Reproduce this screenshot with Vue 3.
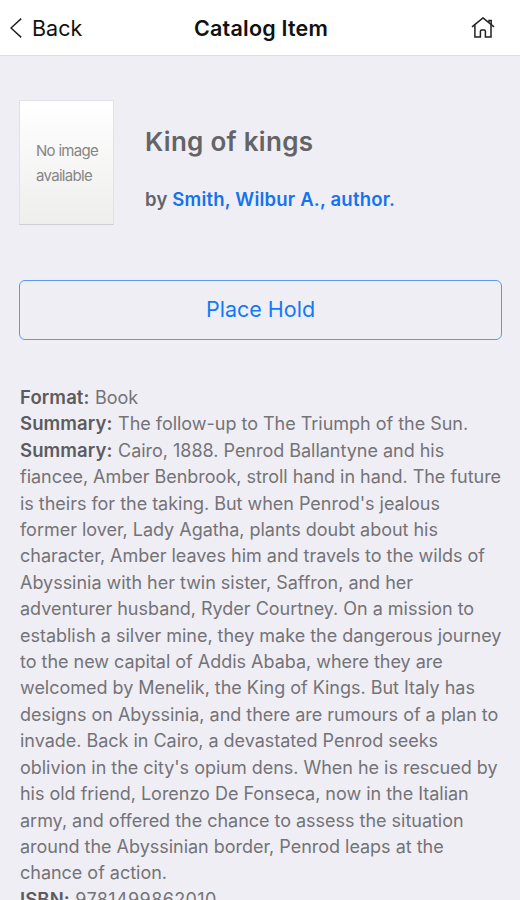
<template>
  <div class="screen">
    <header class="nav-bar">
      <button class="back-btn" type="button">
        <svg class="back-icon" width="12" height="20" viewBox="0 0 12 20">
          <path d="M11.2 0.6L1 10L11.2 19.4" />
        </svg>
        <span>Back</span>
      </button>
      <h1 class="nav-title">Catalog Item</h1>
      <button class="home-btn" type="button" aria-label="Home">
        <svg class="home-icon" width="24" height="22" viewBox="0 0 24 22">
          <path d="M1 9.8L12 0.9L23 9.8" />
          <path d="M3.9 8V20H9.4V14.2Q9.4 13 10.6 13H13.2Q14.4 13 14.4 14.2V20H20V8" />
          <path d="M18 5.2V3.6H20.2V7.6" />
        </svg>
      </button>
    </header>

    <main class="content">
      <section class="item">
        <div class="cover">No image<br />available</div>
        <div class="item-info">
          <h2 class="item-title">{{ item.title }}</h2>
          <p class="item-author">by <a>{{ item.author }}</a></p>
        </div>
      </section>

      <button class="hold-btn" type="button">Place Hold</button>

      <section class="details">
        <p v-for="(field, index) in item.fields" :key="index" class="field">
          <b>{{ field.label }}:</b> <span :class="{ digits: field.label === 'ISBN' }">{{ field.value }}</span>
        </p>
      </section>
    </main>
  </div>
</template>

<script setup>
import { reactive } from 'vue'

const item = reactive({
  title: 'King of kings',
  author: 'Smith, Wilbur A., author.',
  fields: [
    { label: 'Format', value: 'Book' },
    { label: 'Summary', value: 'The follow-up to The Triumph of the Sun.' },
    {
      label: 'Summary',
      value: `Cairo, 1888. Penrod Ballantyne and his
fiancee, Amber Benbrook, stroll hand in hand. The future
is theirs for the taking. But when Penrod's jealous
former lover, Lady Agatha, plants doubt about his
character, Amber leaves him and travels to the wilds of
Abyssinia with her twin sister, Saffron, and her
adventurer husband, Ryder Courtney. On a mission to
establish a silver mine, they make the dangerous journey
to the new capital of Addis Ababa, where they are
welcomed by Menelik, the King of Kings. But Italy has
designs on Abyssinia, and there are rumours of a plan to
invade. Back in Cairo, a devastated Penrod seeks
oblivion in the city's opium dens. When he is rescued by
his old friend, Lorenzo De Fonseca, now in the Italian
army, and offered the chance to assess the situation
around the Abyssinian border, Penrod leaps at the
chance of action.`
    },
    { label: 'ISBN', value: '9781499862010' }
  ]
})
</script>

<style>
body {
  margin: 0;
  background-color: #efeef4;
}
</style>

<style scoped>
.screen {
  height: 900px;
  overflow: hidden;
  box-sizing: border-box;
  background-color: #efeef4;
  color: #646368;
  font-family: Inter, "Liberation Sans", sans-serif;
}

button {
  margin: 0;
  padding: 0;
  border: none;
  background: none;
  font-family: inherit;
  color: inherit;
}

.nav-bar {
  display: grid;
  grid-template-columns: 1fr auto 1fr;
  align-items: center;
  height: 56px;
  padding: 0 25px 0 10px;
  box-sizing: border-box;
  border-bottom: 1px solid #dedee1;
  background-color: #fff;
  color: #111;
}

.back-btn {
  display: flex;
  align-items: center;
  gap: 10px;
  font-size: 21.5px;
  line-height: 28px;
}

.back-icon,
.home-icon {
  display: block;
  fill: none;
  stroke: #222;
  stroke-width: 1.5;
}

.nav-title {
  margin: 0 0 0 17px;
  font-size: 21.5px;
  font-weight: 600;
  letter-spacing: 0.2px;
  line-height: 28px;
}

.home-btn {
  justify-self: end;
}

.content {
  padding: 44px 18px 0 19px;
}

.item {
  display: flex;
  gap: 31px;
  height: 125px;
}

.cover {
  display: flex;
  align-items: center;
  width: 95px;
  padding: 1px 0 0 16px;
  box-sizing: border-box;
  border: 1px solid #e2e2e6;
  border-bottom-color: #cfcfd2;
  background: linear-gradient(#fff, #eeeeed);
  color: #858585;
  font-size: 15px;
  letter-spacing: -0.7px;
  line-height: 25px;
  white-space: nowrap;
}

.item-title {
  margin: 25px 0 0;
  font-size: 26px;
  font-weight: 600;
  letter-spacing: 0.28px;
  line-height: 34px;
}

.item-author {
  margin: 27px 0 0;
  font-size: 18.5px;
  font-weight: 600;
  letter-spacing: 0.2px;
  line-height: 26px;
}

.item-author a {
  color: #1572f0;
}

.hold-btn {
  display: block;
  width: 100%;
  height: 60px;
  margin-top: 55px;
  padding-bottom: 2px;
  border: 1.5px solid #5c97f0;
  border-radius: 6px;
  color: #127af8;
  font-size: 21.5px;
}

.details {
  margin-top: 45px;
  padding-left: 1px;
  color: #747378;
  font-size: 18px;
  letter-spacing: -0.02px;
  line-height: 26.4px;
  white-space: nowrap;
}

.field {
  margin: 0;
}

.field span {
  white-space: pre;
}

.field .digits {
  letter-spacing: 0.38px;
}

.field b {
  margin-right: 0.5px;
  color: #5c5b60;
  font-size: 18.5px;
  font-weight: 600;
  letter-spacing: 0.1px;
  line-height: 1;
}
</style>
